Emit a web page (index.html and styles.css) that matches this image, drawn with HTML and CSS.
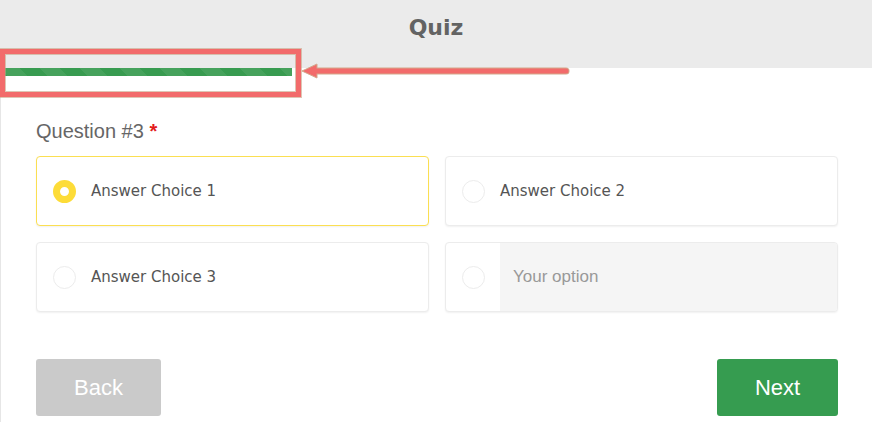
FILE: index.html
```html
<!DOCTYPE html>
<html>
<head>
<meta charset="utf-8">
<link rel="stylesheet" href="styles.css">
</head>
<body>
<div class="page">
  <header class="header"><h1 class="title">Quiz</h1></header>
  <div class="progress"><div class="progress-fill" style="width:33.5%"></div></div>
  <main class="main">
    <div class="question">Question #3 <span class="req">*</span></div>
    <div class="choices">
      <label class="card selected"><span class="radio"></span><span class="label">Answer Choice 1</span></label>
      <label class="card"><span class="radio"></span><span class="label">Answer Choice 2</span></label>
      <label class="card"><span class="radio"></span><span class="label">Answer Choice 3</span></label>
      <label class="card other"><span class="radio"></span><span class="other-input">Your option</span></label>
    </div>
    <div class="nav">
      <button class="btn back">Back</button>
      <button class="btn next">Next</button>
    </div>
  </main>
  <div class="annot-box"></div>
  <svg class="annot-arrow" width="280" height="20" viewBox="0 0 280 20">
    <line x1="14" y1="10" x2="266" y2="10" stroke="#d4a88c" stroke-width="7" stroke-linecap="round"/>
    <path d="M2 10 L17 3 L17 17 Z" fill="#f26b6b" stroke="#d4a88c" stroke-width="1"/>
    <line x1="14" y1="10" x2="266" y2="10" stroke="#f26b6b" stroke-width="5" stroke-linecap="round"/>
  </svg>
</div>
</body>
</html>
```
FILE: styles.css
```css
html, body {
  margin: 0;
  padding: 0;
  background: #fff;
}
.page {
  position: relative;
  width: 872px;
  height: 422px;
  overflow: hidden;
  font-family: "Liberation Sans", Arial, sans-serif;
}
.header {
  height: 68px;
  background: #ebebeb;
  box-sizing: border-box;
  padding-top: 14px;
}
.title {
  margin: 0;
  text-align: center;
  font-family: "DejaVu Sans", Verdana, sans-serif;
  font-weight: bold;
  font-size: 22px;
  line-height: 28px;
  color: #636363;
}
.progress {
  height: 8px;
  background: #fff;
}
.progress-fill {
  height: 8px;
  background-color: #389b50;
  background-image: linear-gradient(45deg,
    rgba(255,255,255,0.07) 25%, transparent 25%,
    transparent 50%, rgba(255,255,255,0.07) 50%,
    rgba(255,255,255,0.07) 75%, transparent 75%, transparent);
  background-size: 40px 40px;
}
.main {
  border-left: 1px solid #e6e6e6;
  padding: 44px 34px 0 35px;
  height: 346px;
  box-sizing: border-box;
}
.question {
  font-size: 20px;
  line-height: 22px;
  color: #666;
  margin-bottom: 14px;
}
.req {
  color: #e21b1b;
  font-weight: bold;
}
.choices {
  display: grid;
  grid-template-columns: 1fr 1fr;
  gap: 16px;
}
.card {
  display: flex;
  align-items: center;
  height: 70px;
  box-sizing: border-box;
  border: 1px solid #ececec;
  border-radius: 4px;
  box-shadow: 0 1px 2px rgba(0,0,0,0.06);
  padding-left: 16px;
  background: #fff;
}
.card.selected {
  border-color: #fbdf52;
}
.radio {
  width: 23px;
  height: 23px;
  box-sizing: border-box;
  border-radius: 50%;
  border: 1px solid #ececec;
  background: #fff;
  flex: none;
  margin-right: 15px;
}
.selected .radio {
  border: 7px solid #fddc38;
  background: #fff;
}
.label {
  font-family: "DejaVu Sans", Verdana, sans-serif;
  font-size: 15px;
  color: #555;
}
.other-input {
  flex: 1;
  align-self: stretch;
  margin-left: 15px;
  background: #f5f5f5;
  border-radius: 0 3px 3px 0;
  display: flex;
  align-items: center;
  padding-left: 13px;
  font-size: 17px;
  color: #999;
}
.card.other .radio {
  margin-right: 0;
}
.nav {
  display: flex;
  justify-content: space-between;
  margin-top: 47px;
}
.btn {
  height: 57px;
  border: none;
  border-radius: 3px;
  color: #fff;
  font-family: "Liberation Sans", Arial, sans-serif;
  font-size: 22px;
  padding: 0;
}
.back {
  width: 125px;
  background: #cacaca;
}
.next {
  width: 121px;
  background: #369c50;
}
.annot-box {
  position: absolute;
  left: 0;
  top: 49px;
  width: 301px;
  height: 48px;
  box-sizing: border-box;
  border: 5px solid #f26b6b;
  box-shadow: 0 0 0 1px rgba(200,160,130,0.6), inset 0 0 0 1px rgba(200,160,130,0.6);
}
.annot-arrow {
  position: absolute;
  left: 300px;
  top: 61px;
}
```
